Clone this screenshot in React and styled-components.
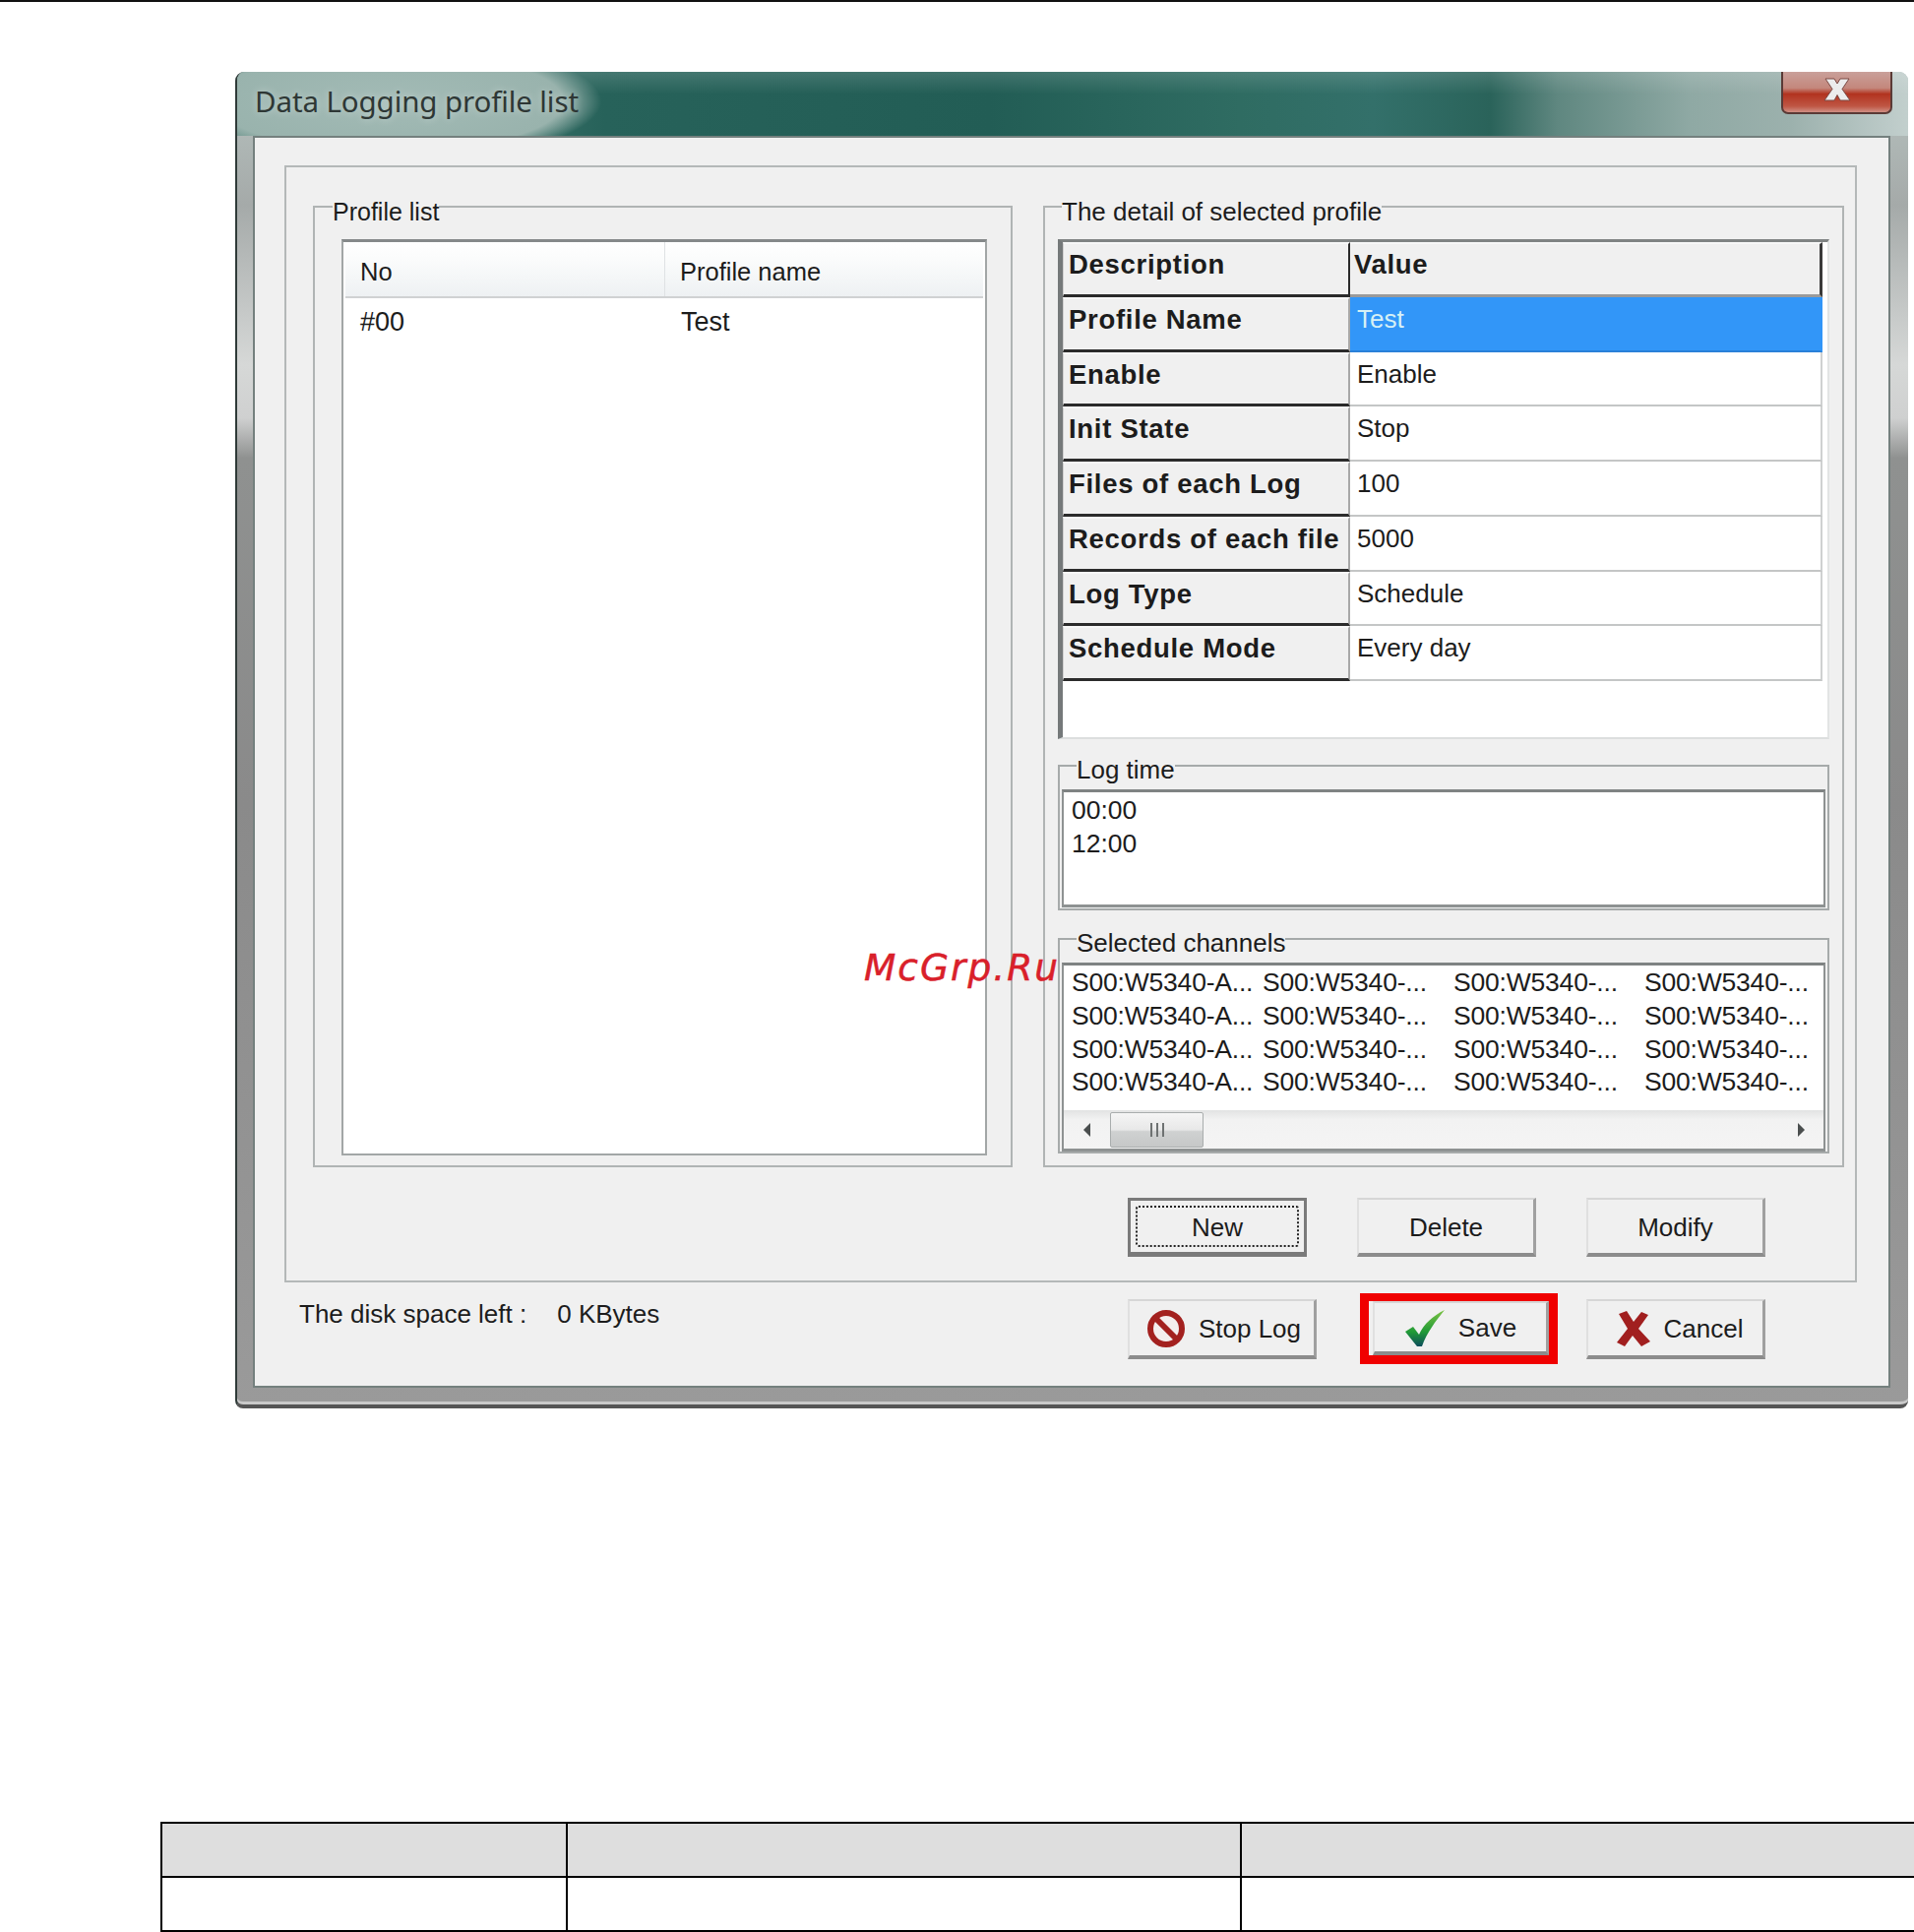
import React from "react";
import styled, { createGlobalStyle } from "styled-components";

const GlobalStyle = createGlobalStyle`
  * { box-sizing: border-box; }
  html, body { margin: 0; padding: 0; background: #fff; }
  body { font-family: "Liberation Sans", Arial, sans-serif; color: #1c1c1c; }
`;

const Page = styled.div`
  position: relative;
  width: 1945px;
  height: 1963px;
  overflow: hidden;
  background: #fff;
`;

const TopRule = styled.div`
  height: 2px;
  background: #111;
`;

const Dialog = styled.div`
  width: 1700px;
  height: 1358px;
  margin: 71px 0 0 239px;
  display: flex;
  flex-direction: column;
  border-radius: 9px 9px 8px 8px;
  overflow: hidden;
  border-left: 2px solid #2f3a38;
  border-bottom: 4px solid #555;
  box-shadow: inset 0 -3px 0 #c9c9c9;
  background: linear-gradient(
    to bottom,
    #b8c4c1 0%,
    #a5aaa9 10%,
    #d6d8d7 22%,
    #cfd0d0 26%,
    #8f9190 29%,
    #8a8a8a 55%,
    #9a9a9a 100%
  );
`;

const TitleBar = styled.div`
  height: 65px;
  flex: none;
  display: flex;
  justify-content: space-between;
  align-items: flex-start;
  padding: 0 16px 0 18px;
  background:
    radial-gradient(
      ellipse 215px 62px at 155px 30px,
      #a3bbb6 0%,
      #99b3ad 82%,
      rgba(124, 159, 152, 0) 100%
    ),
    linear-gradient(to bottom, rgba(255, 255, 255, 0.14), rgba(255, 255, 255, 0) 35%),
    linear-gradient(
      to right,
      #5f8a82 0%,
      #3f766d 14%,
      #27625a 22%,
      #225d55 45%,
      #2f6c62 60%,
      #33706a 68%,
      #2a635a 75%,
      #5f8780 79%,
      #8fa9a4 87%,
      #9cb1ad 93%,
      #c2cfcd 100%
    );
`;

const Title = styled.div`
  margin-top: 12px;
  font-family: "Noto Sans", "Open Sans", sans-serif;
  font-size: 29.5px;
  line-height: 36px;
  letter-spacing: -0.1px;
  color: #2e3735;
  text-shadow: 0 0 8px rgba(255, 255, 255, 0.45);
`;

const CloseButton = styled.div`
  width: 113px;
  height: 43px;
  display: flex;
  align-items: center;
  justify-content: center;
  padding-bottom: 6px;
  border: 2px solid #5a3a36;
  border-top: none;
  border-radius: 0 0 7px 7px;
  background: linear-gradient(
    to bottom,
    #c9a09a 0%,
    #c4877c 40%,
    #b2331f 55%,
    #bf5644 85%,
    #d08f84 100%
  );
`;

const Client = styled.div`
  flex: 1;
  margin: 0 18px 17px 16px;
  border: 2px solid #74807e;
  background: #f0f0f0;
`;

const MainGroup = styled.div`
  margin: 28px 32px 0 30px;
  border: 2px solid #b4b8b8;
  padding: 20px 0 24px 27px;
`;

const Columns = styled.div`
  display: flex;
  gap: 31px;
`;

const Group = styled.fieldset`
  margin: 0;
  min-width: 0;
  width: ${(p) => p.$width || "auto"};
  height: ${(p) => p.$height};
  padding: ${(p) => p.$padding};
  border: 2px solid #b0b4b4;
  display: flex;
  flex-direction: column;
`;

const Legend = styled.legend`
  margin-left: ${(p) => p.$left};
  padding: ${(p) => p.$top || "10px"} 0 0;
  font-size: ${(p) => p.$size || "26px"};
  line-height: 30px;
`;

const ListBox = styled.div`
  flex: 1;
  background: #fff;
  border: 2px solid #a2a6a6;
  border-top: 3px solid #85898a;
  padding: 0 2px;
`;

const ListHeader = styled.div`
  height: 57px;
  display: grid;
  grid-template-columns: 325px 1fr;
  background: linear-gradient(to bottom, #fff 0%, #fbfcfc 30%, #eef1f3 100%);
  border-bottom: 2px solid #d0d2d3;
`;

const ListHeadCell = styled.div`
  padding: 15px 0 0 15px;
  font-size: 25.5px;
  line-height: 30px;
  border-right: ${(p) => (p.$divider ? "1px solid #dfe2e4" : "none")};
`;

const ListRow = styled.div`
  display: grid;
  grid-template-columns: 325px 1fr;
  padding-top: 9px;
`;

const ListCell = styled.div`
  padding-left: ${(p) => p.$pad};
  font-size: 27px;
  line-height: 30px;
`;

const DetailGrid = styled.div`
  height: 508px;
  flex: none;
  background: #fff;
  border-top: 3px solid #7f8383;
  border-left: 5px solid #75797a;
  border-right: 2px solid #e2e4e4;
  border-bottom: 2px solid #dcdede;
`;

const DetailRows = styled.div`
  display: grid;
  grid-template-columns: 292px 480px;
  grid-auto-rows: 55.75px;
`;

const LabelCell = styled.div`
  padding: 5px 0 0 5px;
  font-size: 27.5px;
  font-weight: 700;
  letter-spacing: 0.7px;
  line-height: 32px;
  white-space: nowrap;
  overflow: hidden;
  background: #f0f0f0;
  border-top: 2px solid #f7f7f7;
  border-left: 1px solid #d0d0d0;
  border-right: 2px solid ${(p) => (p.$head ? "#2a2a2a" : "#a8a8a8")};
  border-bottom: 3px solid #2b2b2b;
`;

const HeadValueCell = styled(LabelCell)`
  padding-left: 4px;
  border-left: none;
  border-right: 3px solid #3a3a3a;
  border-bottom: 3px solid #9a9a9a;
`;

const ValueCell = styled.div`
  padding: 6px 0 0 7px;
  font-size: 26px;
  line-height: 32px;
  color: ${(p) => (p.$selected ? "#d6f0f5" : "#1c1c1c")};
  background: ${(p) => (p.$selected ? "#3296f8" : "#fff")};
  border-right: 2px solid ${(p) => (p.$selected ? "#3296f8" : "#cfd1d1")};
  border-bottom: 2px solid ${(p) => (p.$selected ? "#2a80d8" : "#c4c6c6")};
`;

const SubGroup = styled(Group)`
  margin-top: ${(p) => p.$gap};
  flex: none;
  padding: 5px 2px 1px;
  border-color: #a6aaaa;
`;

const TextList = styled.div`
  height: ${(p) => p.$height};
  flex: none;
  display: flex;
  flex-direction: column;
  background: #fff;
  border: 2px solid #8e9292;
  border-top: 3px solid #7f8383;
  border-bottom-width: 3px;
  padding: ${(p) => p.$padding};
  font-size: 26.5px;
  line-height: 33.8px;
`;

const ChannelGrid = styled.div`
  display: grid;
  grid-template-columns: repeat(4, 194px);
  padding-left: 8px;
  white-space: nowrap;
  letter-spacing: -0.2px;
`;

const ScrollBar = styled.div`
  margin-top: auto;
  height: 39px;
  display: flex;
  align-items: center;
  background: linear-gradient(to bottom, #e2e3e3 0%, #f2f2f2 25%, #f4f4f4 100%);
`;

const ScrollArrow = styled.div`
  width: 47px;
  flex: none;
  display: flex;
  align-items: center;
  justify-content: center;
  margin-left: ${(p) => (p.$end ? "auto" : "0")};
`;

const ScrollThumb = styled.div`
  width: 95px;
  height: 36px;
  display: flex;
  align-items: center;
  justify-content: center;
  border: 1px solid #a9adad;
  border-radius: 2px;
  background: linear-gradient(to bottom, #f5f5f5 0%, #e8e8e8 50%, #cfd1d1 55%, #c6c8c8 100%);
`;

const ButtonRow = styled.div`
  display: flex;
  justify-content: flex-end;
  gap: 51px;
  margin-top: 31px;
  padding-right: 91px;
`;

const Button = styled.div`
  width: ${(p) => p.$width || "182px"};
  height: ${(p) => p.$height || "60px"};
  flex: none;
  display: flex;
  align-items: center;
  justify-content: center;
  gap: 13px;
  padding: 2px 0 0 ${(p) => p.$shift || "0"};
  font-size: 26px;
  background: #f0f0f0;
  border-top: 2px solid #d6d6d6;
  border-left: 2px solid #e0e0e0;
  border-right: 3px solid #a0a0a0;
  border-bottom: 4px solid #8c8c8c;
`;

const FocusedButton = styled(Button)`
  padding: 5px;
  border: 3px solid #7a7a7a;
  border-bottom-width: 5px;
`;

const FocusRing = styled.span`
  width: 100%;
  height: 100%;
  display: flex;
  align-items: center;
  justify-content: center;
  padding-top: 2px;
  border: 2px dotted #222;
  border-radius: 3px;
`;

const BottomRow = styled.div`
  display: flex;
  align-items: center;
  justify-content: space-between;
  margin-top: 11px;
  padding: 0 125px 0 45px;
`;

const DiskText = styled.div`
  align-self: flex-start;
  display: flex;
  gap: 31px;
  margin-top: 6px;
  font-size: 26px;
  line-height: 30px;
`;

const ActionButtons = styled.div`
  display: flex;
  align-items: center;
`;

const Highlight = styled.div`
  width: 201px;
  height: 72px;
  margin: 0 29px 0 44px;
  padding-left: 4px;
  border: 9px solid #f00000;
  border-top-width: 8px;
`;

const Watermark = styled.div`
  position: absolute;
  left: 878px;
  top: 959px;
  font-family: "DejaVu Sans", sans-serif;
  font-style: italic;
  font-size: 37.5px;
  letter-spacing: 2px;
  line-height: 48px;
  color: #d9202a;
  -webkit-text-stroke: 0.5px #d9202a;
`;

const Table = styled.table`
  width: 1790px;
  margin: 420px 0 0 163px;
  table-layout: fixed;
  border-collapse: collapse;
`;

const Cell = styled.td`
  height: 55px;
  padding: 0;
  border: 2px solid #000;
  background: ${(p) => (p.$head ? "#dedede" : "#fff")};
`;

const detailRows = [
  ["Profile Name", "Test"],
  ["Enable", "Enable"],
  ["Init State", "Stop"],
  ["Files of each Log", "100"],
  ["Records of each file", "5000"],
  ["Log Type", "Schedule"],
  ["Schedule Mode", "Every day"],
];

const channelRows = [0, 1, 2, 3];

function CloseIcon() {
  return (
    <svg width="30" height="24" viewBox="0 0 30 24">
      <path
        d="M3 1 H12 L15 6 L18 1 H27 L20 11.5 L28 23 H18 L15 17.5 L12 23 H2 L10 11.5 Z"
        fill="#ececec"
        stroke="#7a4a44"
        strokeWidth="1"
      />
    </svg>
  );
}

function StopIcon() {
  return (
    <svg width="40" height="40" viewBox="0 0 40 40">
      <circle cx="20" cy="20" r="16" fill="#f4eeee" stroke="#a3211f" strokeWidth="6" />
      <path d="M9 9 L31 31" stroke="#a3211f" strokeWidth="6" />
    </svg>
  );
}

function CheckIcon() {
  return (
    <svg width="42" height="38" viewBox="0 0 42 38">
      <defs>
        <linearGradient id="checkFill" x1="0" y1="0" x2="0" y2="1">
          <stop offset="0" stopColor="#7cc243" />
          <stop offset="0.6" stopColor="#1f9a36" />
          <stop offset="1" stopColor="#0d4d5c" />
        </linearGradient>
      </defs>
      <path
        d="M1 22 L9 17 L15 25 C20 14 29 6 41 0 C32 11 23 23 18 37 L13 37 Z"
        fill="url(#checkFill)"
      />
    </svg>
  );
}

function CrossIcon() {
  return (
    <svg width="36" height="36" viewBox="0 0 36 36">
      <path
        d="M3 3 L11 0 L18 11 L26 1 L33 4 L23 18 L35 31 L26 36 L17 25 L9 36 L1 32 L12 18 Z"
        fill="#a11f1f"
      />
    </svg>
  );
}

function ThumbGrip() {
  return (
    <svg width="16" height="16" viewBox="0 0 16 16">
      <path d="M2 1 V15 M8 1 V15 M14 1 V15" stroke="#6e7272" strokeWidth="2" />
    </svg>
  );
}

function Arrow({ right }) {
  return (
    <svg width="10" height="16" viewBox="0 0 10 16">
      <path d={right ? "M2 1 L9 8 L2 15 Z" : "M8 1 L1 8 L8 15 Z"} fill="#4a4e4e" />
    </svg>
  );
}

function App() {
  return (
    <Page>
      <GlobalStyle />
      <TopRule />
      <Dialog>
        <TitleBar>
          <Title>Data Logging profile list</Title>
          <CloseButton>
            <CloseIcon />
          </CloseButton>
        </TitleBar>
        <Client>
          <MainGroup>
            <Columns>
              <Group $width="711px" $height="996px" $padding="13px 24px 10px 27px">
                <Legend $left="-9px" $size="25px">Profile list</Legend>
                <ListBox>
                  <ListHeader>
                    <ListHeadCell $divider>No</ListHeadCell>
                    <ListHeadCell>Profile name</ListHeadCell>
                  </ListHeader>
                  <ListRow>
                    <ListCell $pad="15px">#00</ListCell>
                    <ListCell $pad="16px">Test</ListCell>
                  </ListRow>
                </ListBox>
              </Group>
              <Group $width="814px" $height="996px" $padding="13px 13px 14px 13px">
                <Legend $left="4px">The detail of selected profile</Legend>
                <DetailGrid>
                  <DetailRows>
                    <LabelCell $head>Description</LabelCell>
                    <HeadValueCell>Value</HeadValueCell>
                    {detailRows.map(([label, value], i) => (
                      <React.Fragment key={label}>
                        <LabelCell>{label}</LabelCell>
                        <ValueCell $selected={i === 0}>{value}</ValueCell>
                      </React.Fragment>
                    ))}
                  </DetailRows>
                </DetailGrid>
                <SubGroup $gap="8px" $height="166px">
                  <Legend $top="8px" $left="15px">Log time</Legend>
                  <TextList $height="120px" $padding="2px 9px 0 8px">
                    <div>00:00</div>
                    <div>12:00</div>
                  </TextList>
                </SubGroup>
                <SubGroup $gap="10px" $height="237px">
                  <Legend $top="8px" $left="15px">Selected channels</Legend>
                  <TextList $height="192px" $padding="1px 0 0">
                    <ChannelGrid>
                      {channelRows.map((row) => (
                        <React.Fragment key={row}>
                          <div>S00:W5340-A...</div>
                          <div>S00:W5340-...</div>
                          <div>S00:W5340-...</div>
                          <div>S00:W5340-...</div>
                        </React.Fragment>
                      ))}
                    </ChannelGrid>
                    <ScrollBar>
                      <ScrollArrow>
                        <Arrow />
                      </ScrollArrow>
                      <ScrollThumb>
                        <ThumbGrip />
                      </ScrollThumb>
                      <ScrollArrow $end>
                        <Arrow right />
                      </ScrollArrow>
                    </ScrollBar>
                  </TextList>
                </SubGroup>
              </Group>
            </Columns>
            <ButtonRow>
              <FocusedButton>
                <FocusRing>New</FocusRing>
              </FocusedButton>
              <Button>Delete</Button>
              <Button>Modify</Button>
            </ButtonRow>
          </MainGroup>
          <BottomRow>
            <DiskText>
              <span>The disk space left :</span>
              <span>0 KBytes</span>
            </DiskText>
            <ActionButtons>
              <Button $width="192px" $height="61px" $shift="4px">
                <StopIcon />
                Stop Log
              </Button>
              <Highlight>
                <Button $width="179px" $height="55px">
                  <CheckIcon />
                  Save
                </Button>
              </Highlight>
              <Button $height="61px" $shift="8px">
                <CrossIcon />
                Cancel
              </Button>
            </ActionButtons>
          </BottomRow>
        </Client>
      </Dialog>
      <Table>
        <colgroup>
          <col style={{ width: 412 }} />
          <col style={{ width: 685 }} />
          <col />
        </colgroup>
        <tbody>
          <tr>
            <Cell $head />
            <Cell $head />
            <Cell $head />
          </tr>
          <tr>
            <Cell />
            <Cell />
            <Cell />
          </tr>
        </tbody>
      </Table>
      <Watermark>McGrp.Ru</Watermark>
    </Page>
  );
}

export default App;
